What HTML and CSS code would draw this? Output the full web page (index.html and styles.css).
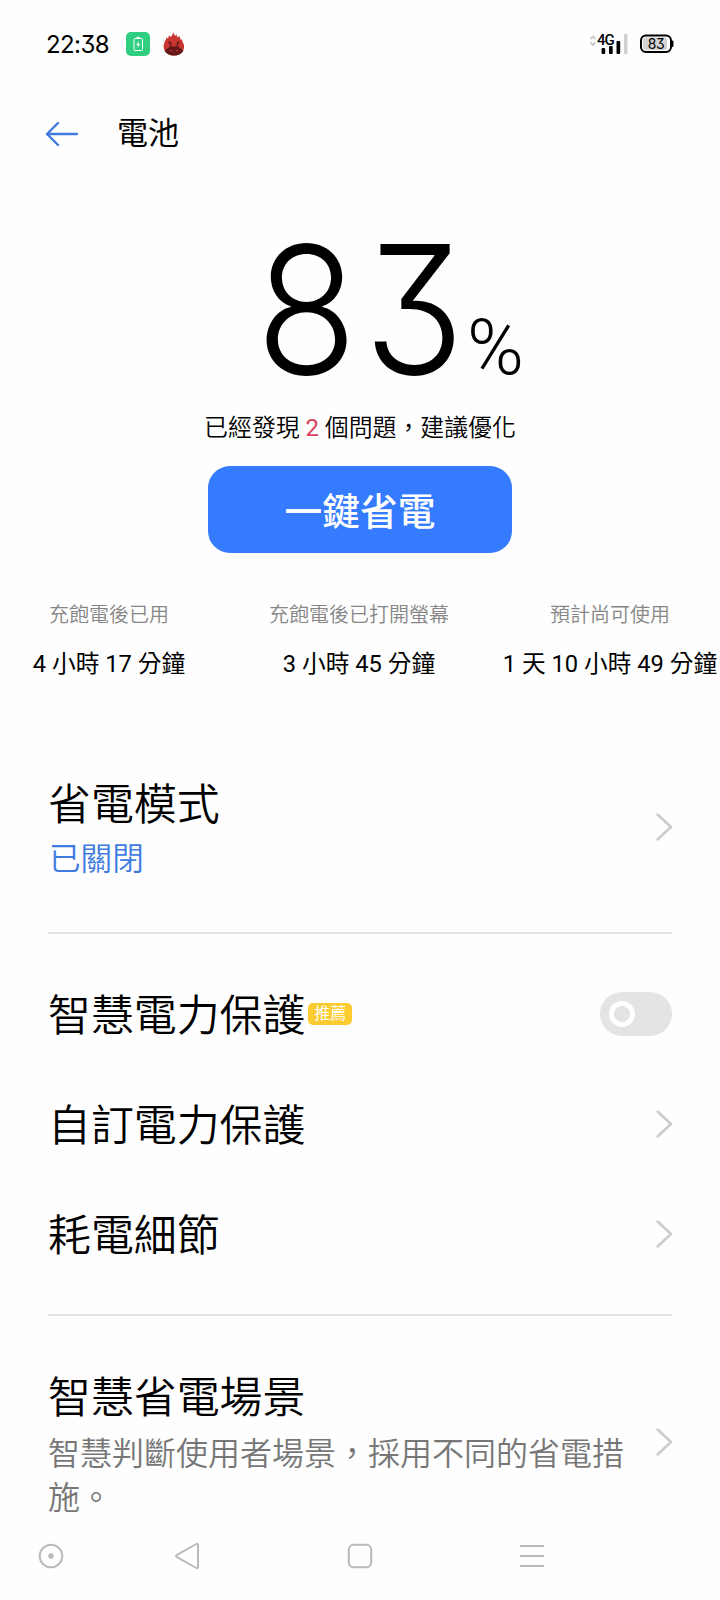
FILE: index.html
```html
<!DOCTYPE html>
<html lang="zh-Hant">
<head>
<meta charset="utf-8">
<title>電池</title>
<link rel="stylesheet" href="styles.css">
</head>
<body>
<div class="screen">
  <div class="status">
    <span class="clock">22:38</span>
    <svg class="app-battery" width="24" height="24" viewBox="0 0 24 24"><rect width="24" height="24" rx="5" fill="#2fce80"/><rect x="8" y="6.500" width="8.500" height="12" rx="1" fill="none" stroke="#fff" stroke-width="1"/><path d="M10.700 5.400h3" stroke="#fff" stroke-width="1.200"/><path d="M12.800 9l-2.600 4h1.800l-.5 3 2.700-4h-1.800z" fill="#fff"/></svg>
    <svg class="app-flame" width="22" height="24" viewBox="0 0 22 24"><path d="M2 9c1-1 1-2 1.400-3.500L5 6.500l1-3L8 5l2.500-4.500L12 4l1.500-1.500 1 3L16.500 4l1 3.500 1.500 0L19.800 10.500c1 1.300 1.500 2.500 1.300 4C21 20 16.500 23.600 11 23.600S.8 20 .6 14.500c0-1.500.4-3 1.400-5.500z" fill="#c93630"/><path d="M1.500 18.500C4 16.800 6 14.500 11 14.500s7 2.300 9.500 4c-1.600 3.200-5.100 5.100-9.500 5.100s-7.900-1.900-9.500-5.100z" fill="#641719"/><path d="M5.500 10l2 1v4.500M16.500 10l-2 1v4.500" fill="none" stroke="#641719" stroke-width="1.500"/><path d="M6.500 18l3 1.300M15.500 18l-3 1.300" stroke="#c93630" stroke-width="1"/></svg>
    <div class="signals">
      <svg width="40" height="24" viewBox="0 0 40 24"><path d="M1.500 7L4 4.500l2.500 2.500M1.500 10.500L4 13l2.500-2.500" fill="none" stroke="#c8c8c8" stroke-width="1.800"/><text x="8" y="13" class="net">4G</text><g fill="#000"><rect x="12.500" y="16" width="3.700" height="6" rx="1"/><rect x="20" y="14" width="3.700" height="8" rx="1"/><rect x="27.500" y="9" width="3.700" height="13" rx="1"/></g><rect x="35" y="2" width="3.500" height="20" rx="1" fill="#d0d0d0"/></svg>
      <svg width="34" height="20" viewBox="0 0 34 20"><rect x="1" y="1.500" width="30" height="16.500" rx="5" fill="#fff" stroke="#000" stroke-width="2"/><rect x="3" y="3.500" width="24" height="12.500" rx="3" fill="#d2d2d2"/><path d="M31 6.500h1.200q1.300 0 1.300 1.300v4q0 1.300-1.300 1.300H31z" fill="#000"/><text x="16" y="14.700" text-anchor="middle" class="level">83</text></svg>
    </div>
  </div>

  <header class="header">
    <svg width="33" height="26" viewBox="0 0 33 26"><path d="M13 2L2 13l11 11M2 13h30" fill="none" stroke="#4079e0" stroke-width="2.400" stroke-linecap="round" stroke-linejoin="round"/></svg>
    <h1>電池</h1>
  </header>

  <section class="hero">
    <div class="percent"><span class="digits">83</span><span class="unit">%</span></div>
    <p class="message">已經發現 <b>2</b> 個問題，建議優化</p>
    <button class="save">一鍵省電</button>
  </section>

  <section class="stats">
    <div><span class="label">充飽電後已用</span><span class="value">4 小時 17 分鐘</span></div>
    <div><span class="label">充飽電後已打開螢幕</span><span class="value">3 小時 45 分鐘</span></div>
    <div><span class="label">預計尚可使用</span><span class="value">1 天 10 小時 49 分鐘</span></div>
  </section>

  <main class="list">
    <div class="group mode">
      <div class="row">
        <div class="text"><h2>省電模式</h2><p class="state">已關閉</p></div>
        <svg class="chevron" width="17" height="28" viewBox="0 0 17 28"><path d="M2.500 1.500L16 14L2.500 26.500"/></svg>
      </div>
    </div>
    <div class="group protection">
      <div class="row single"><h2>智慧電力保護</h2><span class="tag">推薦</span><span class="toggle"><i></i></span></div>
      <div class="row single"><h2>自訂電力保護</h2><svg class="chevron" width="17" height="28" viewBox="0 0 17 28"><path d="M2.500 1.500L16 14L2.500 26.500"/></svg></div>
      <div class="row single"><h2>耗電細節</h2><svg class="chevron" width="17" height="28" viewBox="0 0 17 28"><path d="M2.500 1.500L16 14L2.500 26.500"/></svg></div>
    </div>
    <div class="group scene">
      <div class="row">
        <div class="text"><h2>智慧省電場景</h2><p class="desc">智慧判斷使用者場景，採用不同的省電措施。</p></div>
        <svg class="chevron" width="17" height="28" viewBox="0 0 17 28"><path d="M2.500 1.500L16 14L2.500 26.500"/></svg>
      </div>
    </div>
  </main>

  <nav class="nav">
    <svg width="26" height="28" viewBox="0 0 26 28"><circle cx="13" cy="14" r="11.300"/><circle cx="13" cy="14" r="2.700" class="dot"/></svg>
    <svg width="26" height="28" viewBox="0 0 26 28"><path d="M24 3v22q0 2-1.700 1L3 15.200q-2-1.200 0-2.400L22.300 2Q24 1 24 3z"/></svg>
    <svg width="26" height="28" viewBox="0 0 26 28"><rect x="1.800" y="2.800" width="22.400" height="22.400" rx="5"/></svg>
    <svg width="26" height="28" viewBox="0 0 26 28"><path d="M1 4h24M1 14h24M1 24h24"/></svg>
  </nav>
</div>
</body>
</html>
```

FILE: styles.css
```css
* { box-sizing: border-box; }
body, h1, h2, p { margin: 0; }
body { background: #fefefe; }
.screen {
  width: 720px;
  height: 1600px;
  overflow: hidden;
  display: flex;
  flex-direction: column;
  color: #000;
  font-family: Roboto, "Noto Sans CJK TC", sans-serif;
  font-weight: 350;
}
.screen > * { flex-shrink: 0; }
.status {
  height: 88px;
  padding: 0 46px 0 46px;
  display: flex;
  align-items: center;
}
.clock { width: 80px; font: 370 24px Inter, sans-serif; font-feature-settings: "cv09"; letter-spacing: -0.6px; }
.app-flame { margin-left: 13px; }
.signals { margin-left: auto; display: flex; align-items: center; gap: 11px; }
.net { font: 500 15px Roboto, sans-serif; letter-spacing: -1px; }
.level { font: 400 14px Inter, sans-serif; font-feature-settings: "cv09"; letter-spacing: -0.5px; }

.header { height: 92px; padding-left: 45px; display: flex; align-items: center; }
.header h1 { margin-left: 39px; font-size: 31px; font-weight: 400; line-height: 44px; }

.hero { height: 373px; display: flex; flex-direction: column; align-items: center; }
.percent { height: 227px; padding: 25px 0 0 52px; display: flex; align-items: baseline; line-height: 210px; }
.digits {
  font-family: Inter, sans-serif;
  font-size: 178px;
  font-weight: 300;
  font-feature-settings: "cv09";
  letter-spacing: 7px;
  transform: scaleX(0.93);
}
.unit { margin-left: -12px; font-size: 77px; font-weight: 300; }
.message { font-size: 23.900px; line-height: 42px; white-space: nowrap; }
.message b { color: #d8405c; font-weight: 400; }
.save {
  width: 304px;
  height: 88px;
  margin-top: 17px;
  padding: 0 0 3px;
  border: 0;
  border-radius: 22px;
  background: #347bff;
  color: #fff;
  font: 500 37.700px "Noto Sans CJK TC", sans-serif;
}

.stats { height: 177px; padding-top: 46px; display: grid; grid-template-columns: 218px 282px 220px; }
.stats div { display: flex; flex-direction: column; align-items: center; white-space: nowrap; }
.label { font-size: 20px; line-height: 32px; color: #868686; }
.value { margin-top: 15px; font-size: 23.700px; line-height: 36px; font-weight: 380; }

.list { padding: 0 48px; }
.group { border-bottom: 2px solid #e4e4e4; }
.mode { height: 204px; padding-top: 38px; }
.mode .text { padding-top: 7px; }
.protection { height: 382px; padding-top: 25px; }
.scene { height: 196px; padding-top: 52px; border: 0; }
.scene h2 { margin-bottom: 4px; }
.scene .chevron { margin-top: -4px; }
.row { display: flex; align-items: center; }
.single { height: 110px; }
.single h2 { padding-top: 3px; }
h2 { font-size: 42.900px; line-height: 60px; font-weight: 350; }
.text { width: 590px; }
.state { padding-left: 1px; font-size: 31.600px; line-height: 50px; color: #3f7be0; }
.desc { font-size: 32px; line-height: 44px; color: #777; }
.chevron { margin-left: auto; fill: none; stroke: #ccc; stroke-width: 2.500; stroke-linecap: round; stroke-linejoin: round; }
.tag {
  margin-left: 3px;
  width: 44px;
  height: 22px;
  border-radius: 5px;
  background: #fccb30;
  color: #fff;
  font-size: 16px;
  line-height: 21px;
  text-align: center;
  font-weight: 400;
}
.toggle { margin-left: auto; width: 72px; height: 44px; padding: 9px; border-radius: 22px; background: #e4e4e4; }
.toggle i { display: block; width: 26px; height: 26px; border: 5px solid #fff; border-radius: 50%; }

.nav { height: 88px; padding: 0 174px 0 38px; display: grid; grid-template-columns: 136px 173px 172px 26px; align-items: center; }
.nav svg { fill: none; stroke: #bababa; stroke-width: 2; }
.nav .dot { fill: #bababa; stroke: none; }
```
